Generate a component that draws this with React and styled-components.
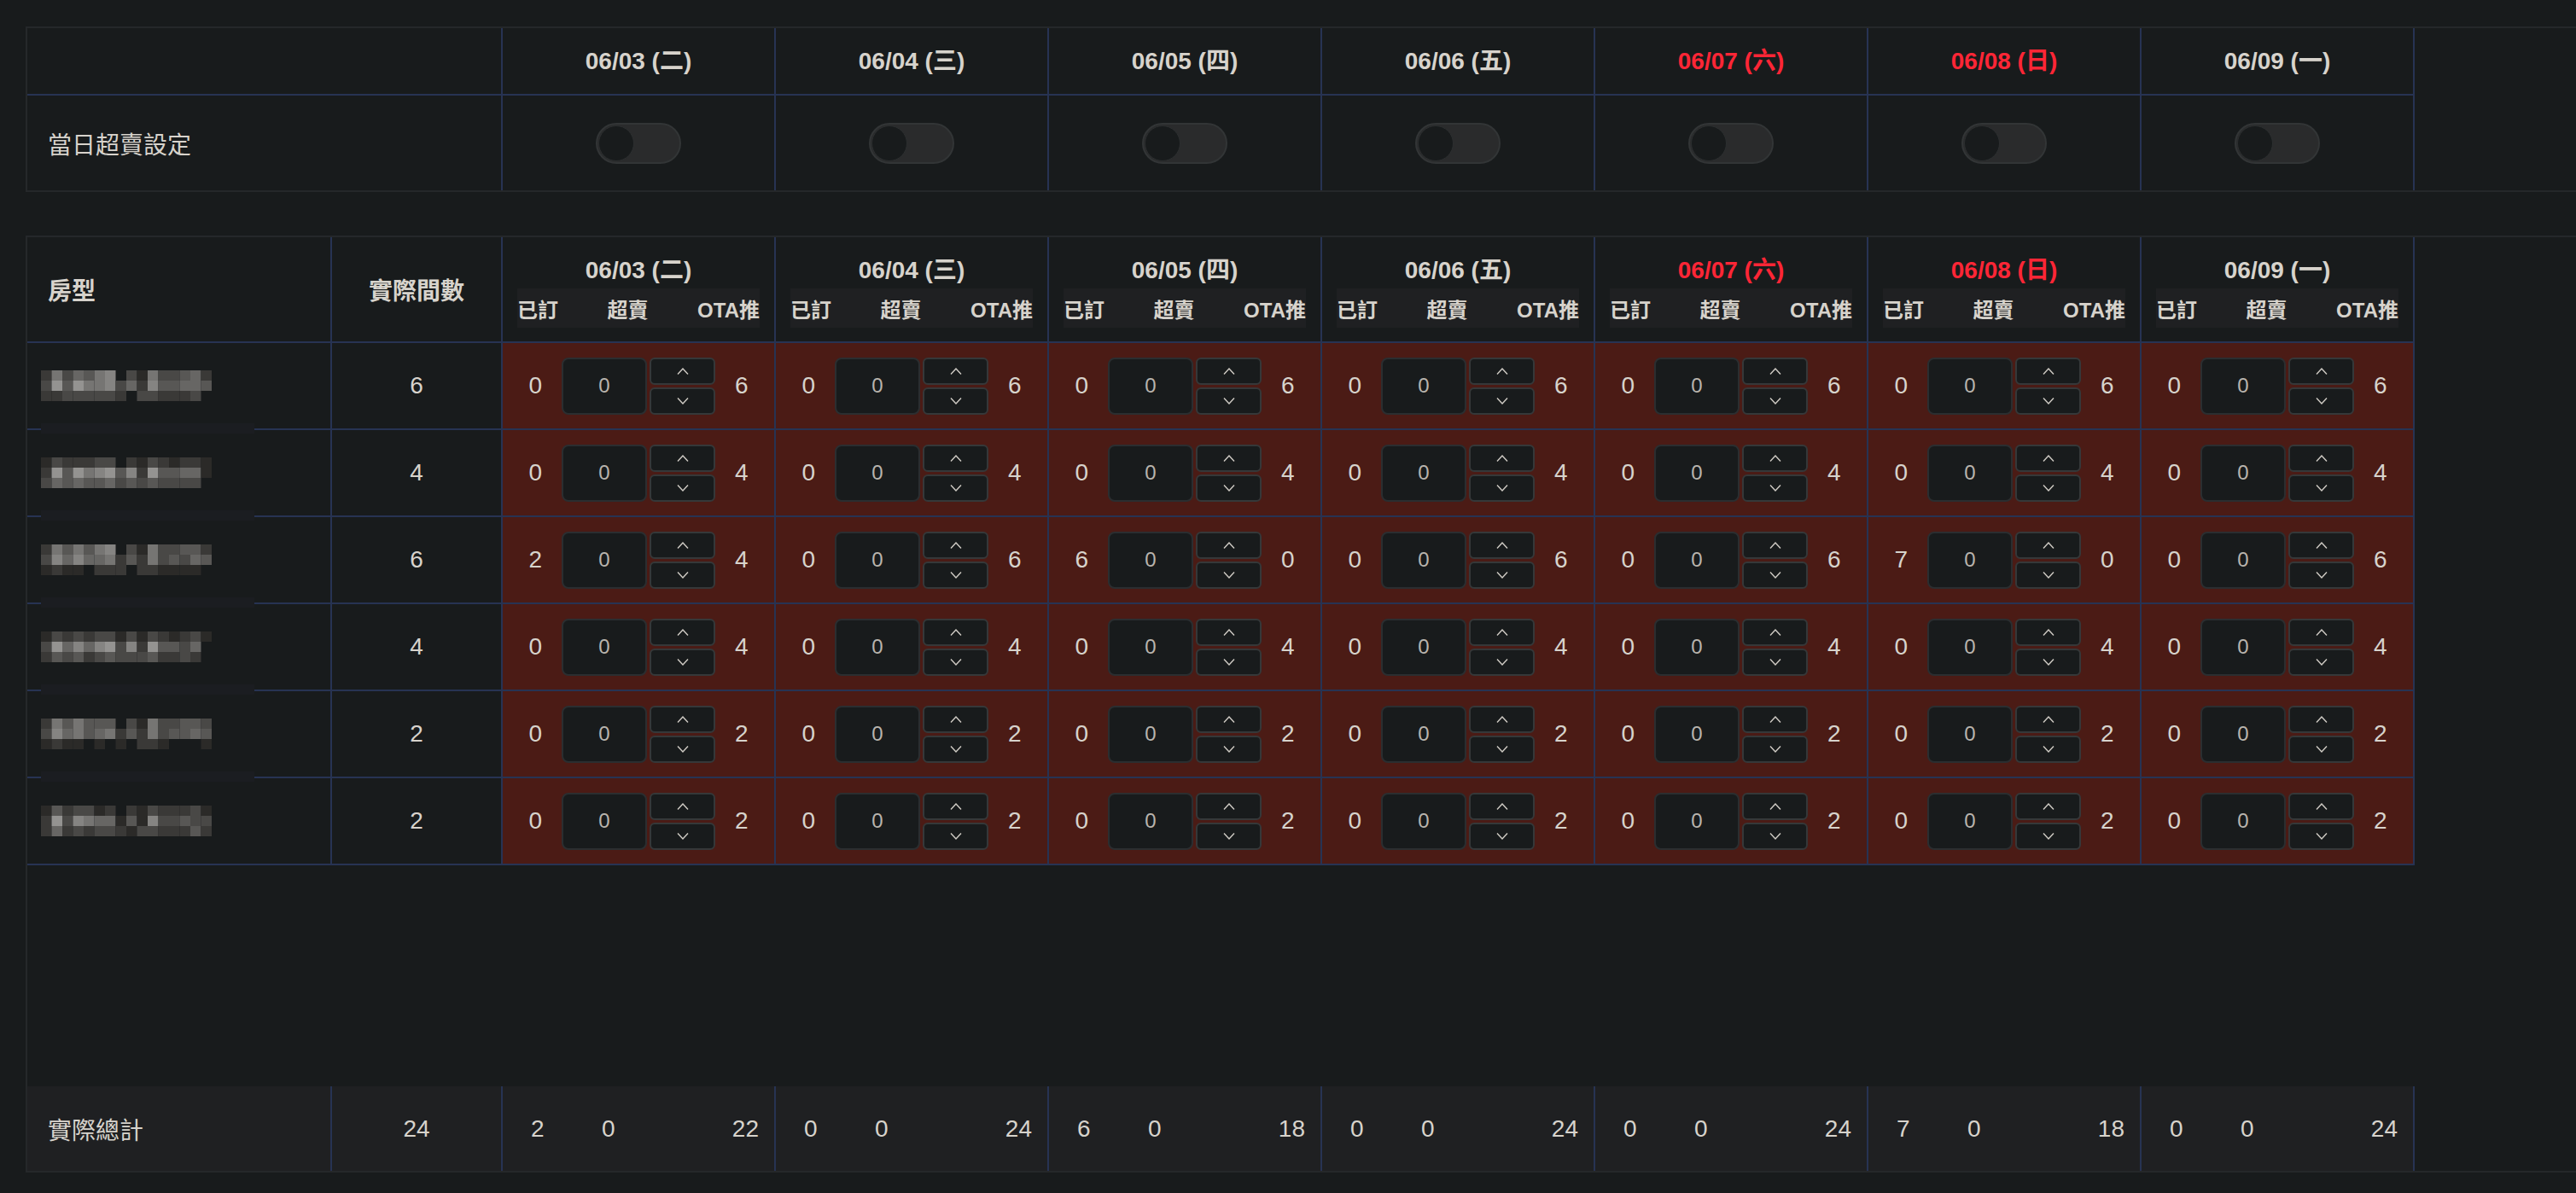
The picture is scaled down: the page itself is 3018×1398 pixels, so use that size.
import React from 'react'
import styled, { createGlobalStyle } from 'styled-components'

const BLUE = '#273353'
const OUTER = '#25282a'

const GlobalStyle = createGlobalStyle`
  html, body {
    margin: 0;
    padding: 0;
    background: #181b1c;
    overflow: hidden;
  }
  body {
    font-family: "Liberation Sans", "Noto Sans CJK TC", sans-serif;
    color: #d7d3cc;
  }
`

const Page = styled.div`
  width: 3018px;
  height: 1398px;
  box-sizing: border-box;
  padding: 31px 0 0 30px;
  display: flex;
  flex-direction: column;
  gap: 51px;
`

const Table = styled.div`
  width: 2988px;
  box-sizing: border-box;
  border: 2px solid ${OUTER};
  border-right: none;
  display: flex;
  flex-direction: column;
`

const Row = styled.div`
  display: grid;
  width: max-content;
  grid-template-columns: ${(p) => p.$cols};
  height: ${(p) => p.$h}px;
  box-sizing: border-box;
  border-bottom: ${(p) => (p.$line ? `2px solid ${BLUE}` : 'none')};
  background: ${(p) => p.$bg || 'transparent'};
`

const Cell = styled.div`
  position: relative;
  box-sizing: border-box;
  border-right: 2px solid ${BLUE};
  display: flex;
  align-items: center;
  justify-content: ${(p) => p.$justify || 'center'};
  padding-left: ${(p) => p.$pl || 0}px;
  font-size: 28px;
  font-weight: ${(p) => (p.$bold ? 700 : 400)};
  background: ${(p) => p.$bg || 'transparent'};
`

const DateText = styled.div`
  font-size: 28px;
  line-height: 28px;
  font-weight: 700;
  color: ${(p) => (p.$weekend ? '#ff2636' : '#d7d3cc')};
`

const DateHead = styled.div`
  box-sizing: border-box;
  border-right: 2px solid ${BLUE};
  display: flex;
  flex-direction: column;
  align-items: center;
  justify-content: flex-end;
  gap: 7px;
  padding: 0 17px 16px;
`

const SubBar = styled.div`
  width: 100%;
  height: 46px;
  background: #1f2022;
  display: flex;
  align-items: center;
  justify-content: space-between;
  font-size: 24px;
  font-weight: 700;
`

const Switch = styled.span`
  width: 100px;
  height: 48px;
  box-sizing: border-box;
  border-radius: 24px;
  background: #2a2b2c;
  border: 2px solid #323536;
  display: flex;
  align-items: center;
  padding: 0 1px;
`

const Knob = styled.span`
  width: 40px;
  height: 40px;
  border-radius: 50%;
  background: #181b1c;
  border: 1px solid #2c2f30;
`

const Stock = styled.div`
  display: flex;
  align-items: center;
  gap: 23px;
  font-size: 28px;
`

const Stepper = styled.div`
  display: flex;
  gap: 3px;
`

const NumInput = styled.div`
  width: 100px;
  height: 67px;
  box-sizing: border-box;
  border: 2px solid #2b2e30;
  border-radius: 8px;
  background: #181b1c;
  display: flex;
  align-items: center;
  justify-content: center;
  font-size: 24px;
  color: #b8b4ad;
`

const Spin = styled.div`
  display: flex;
  flex-direction: column;
  gap: 3px;
`

const SpinBtn = styled.div`
  width: 77px;
  height: 32px;
  box-sizing: border-box;
  border: 2px solid #353839;
  border-radius: 6px;
  background: #181b1c;
  display: flex;
  align-items: center;
  justify-content: center;
`

const Body = styled.div`
  height: 871px;
  display: flex;
  flex-direction: column;
`

const Total = styled.div`
  box-sizing: border-box;
  border-right: 2px solid ${BLUE};
  display: flex;
  align-items: center;
  padding: 0 18px 0 33px;
  font-size: 28px;
`

const TotalVal = styled.span`
  width: ${(p) => (p.$w ? `${p.$w}px` : 'auto')};
  margin-left: ${(p) => (p.$end ? 'auto' : '0')};
`

const BlurEdge = styled.div`
  position: absolute;
  left: 16px;
  bottom: -6px;
  width: 250px;
  height: 12px;
  background: #1b1d21;
  z-index: 1;
`

const dates = [
  ['06/03', '二'],
  ['06/04', '三'],
  ['06/05', '四'],
  ['06/06', '五'],
  ['06/07', '六', true],
  ['06/08', '日', true],
  ['06/09', '一'],
]

const rooms = [
  { total: 6, booked: [0, 0, 0, 0, 0, 0, 0], blur: ['2635467031633452', '3848667352744554', '2233333203322230'] },
  { total: 4, booked: [0, 0, 0, 0, 0, 0, 0], blur: ['1322233021321221', '2848678472844551', '3545445343433330'] },
  { total: 6, booked: [2, 0, 6, 0, 0, 7, 0], blur: ['2646467031633442', '3757556242634354', '1211022202211110'] },
  { total: 4, booked: [0, 0, 0, 0, 0, 0, 0], blur: ['1323233131321231', '3857578372844350', '2434234333422320'] },
  { total: 2, booked: [0, 0, 0, 0, 0, 0, 0], blur: ['2646444031633443', '3756456242634454', '1211010102210001'] },
  { total: 2, booked: [0, 0, 0, 0, 0, 0, 0], blur: ['1423312021322231', '2837655141733433', '2523233213322242'] },
]

const COLS1 = '557px repeat(7, 320px)'
const COLS2 = '357px 200px repeat(7, 320px)'

function Mosaic({ rows }) {
  return (
    <svg width="200" height="36" viewBox="0 0 200 36">
      {rows.map((line, r) =>
        line.split('').map((ch, c) => {
          const n = Number(ch)
          if (!n) return null
          const v = 28 + n * 15
          return (
            <rect
              key={`${r}-${c}`}
              x={c * 12.5}
              y={r * 12}
              width="12.5"
              height="12"
              fill={`rgb(${v},${v - 1},${v - 3})`}
            />
          )
        })
      )}
    </svg>
  )
}

function Chevron({ up }) {
  return (
    <svg width="14" height="8" viewBox="0 0 14 8">
      <polyline
        points={up ? '1,7.5 7,1 13,7.5' : '1,0.5 7,7 13,0.5'}
        fill="none"
        stroke="#d0ccc5"
        strokeWidth="1.4"
      />
    </svg>
  )
}

function StockCell({ booked, ota }) {
  return (
    <Cell $bg="#4b1b15">
      <Stock>
        <span>{booked}</span>
        <Stepper>
          <NumInput>0</NumInput>
          <Spin>
            <SpinBtn>
              <Chevron up />
            </SpinBtn>
            <SpinBtn>
              <Chevron />
            </SpinBtn>
          </Spin>
        </Stepper>
        <span>{ota}</span>
      </Stock>
    </Cell>
  )
}

export default function App() {
  const grand = rooms.reduce((s, r) => s + r.total, 0)
  const totals = dates.map((_, i) => ({
    booked: rooms.reduce((s, r) => s + r.booked[i], 0),
    ota: rooms.reduce((s, r) => s + Math.max(r.total - r.booked[i], 0), 0),
  }))

  return (
    <>
      <GlobalStyle />
      <Page>
        <Table>
          <Row $cols={COLS1} $h={79} $line>
            <Cell />
            {dates.map(([d, w, weekend]) => (
              <Cell key={d}>
                <DateText $weekend={weekend}>{`${d} (${w})`}</DateText>
              </Cell>
            ))}
          </Row>
          <Row $cols={COLS1} $h={111}>
            <Cell $justify="flex-start" $pl={24}>當日超賣設定</Cell>
            {dates.map(([d]) => (
              <Cell key={d}>
                <Switch>
                  <Knob />
                </Switch>
              </Cell>
            ))}
          </Row>
        </Table>

        <Table>
          <Row $cols={COLS2} $h={124} $line>
            <Cell $justify="flex-start" $pl={24} $bold>房型</Cell>
            <Cell $bold>實際間數</Cell>
            {dates.map(([d, w, weekend]) => (
              <DateHead key={d}>
                <DateText $weekend={weekend}>{`${d} (${w})`}</DateText>
                <SubBar>
                  <span>已訂</span>
                  <span>超賣</span>
                  <span>OTA推</span>
                </SubBar>
              </DateHead>
            ))}
          </Row>
          <Body>
            {rooms.map((room, ri) => (
              <Row key={ri} $cols={COLS2} $h={102} $line>
                <Cell $justify="flex-start" $pl={16}>
                  <Mosaic rows={room.blur} />
                  {ri < rooms.length - 1 && <BlurEdge />}
                </Cell>
                <Cell>{room.total}</Cell>
                {dates.map(([d], di) => (
                  <StockCell
                    key={d}
                    booked={room.booked[di]}
                    ota={Math.max(room.total - room.booked[di], 0)}
                  />
                ))}
              </Row>
            ))}
          </Body>
          <Row $cols={COLS2} $h={99} $bg="#1f2022">
            <Cell $justify="flex-start" $pl={24}>實際總計</Cell>
            <Cell>{grand}</Cell>
            {totals.map((t, i) => (
              <Total key={i}>
                <TotalVal $w={83}>{t.booked}</TotalVal>
                <TotalVal>0</TotalVal>
                <TotalVal $end>{t.ota}</TotalVal>
              </Total>
            ))}
          </Row>
        </Table>
      </Page>
    </>
  )
}
